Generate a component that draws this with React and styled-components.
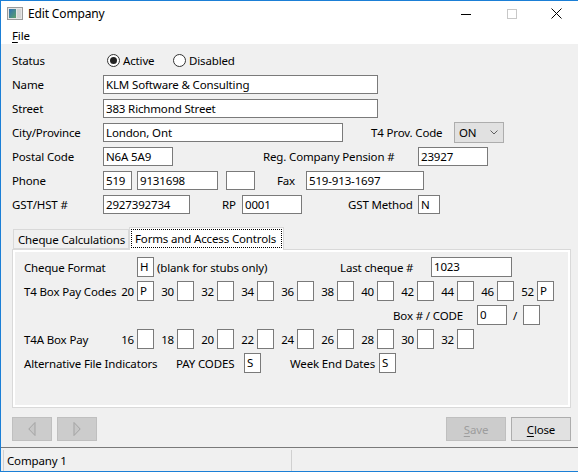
import React from 'react';
import styled, { createGlobalStyle } from 'styled-components';

const GlobalStyle = createGlobalStyle`
  html, body { margin: 0; padding: 0; background: #f0f0f0; }
  body { font-family: "Noto Sans", "Open Sans", sans-serif; font-size: 11.5px; letter-spacing: -0.15px; color: #000; }
  *, *::before, *::after { box-sizing: border-box; }
`;

const Window = styled.div`
  width: 578px;
  height: 472px;
  display: flex;
  flex-direction: column;
  border-top: 1px solid #1b7fd6;
  border-left: 1px solid #1b7fd6;
  border-bottom: 1px solid #1b7fd6;
  background: #f0f0f0;
  overflow: hidden;
`;

const TitleBar = styled.div`
  height: 25px;
  flex: none;
  display: flex;
  align-items: center;
  background: #fff;
  font-size: 12px;
`;

const TitleIcon = styled.svg`
  margin-left: 6px;
  flex: none;
`;

const TitleText = styled.span`
  margin-left: 5px;
  flex: 1;
`;

const WinButton = styled.div`
  width: ${p => p.$w || 46}px;
  height: 25px;
  display: flex;
  align-items: center;
  justify-content: center;
  flex: none;
`;

const MenuBar = styled.div`
  height: 18px;
  flex: none;
  background: #fff;
  display: flex;
  align-items: center;
  padding-left: 11px;
`;

const Mnemonic = styled.span`
  text-decoration: underline;
  text-underline-offset: 2px;
`;

const Body = styled.div`
  flex: 1;
  display: flex;
  flex-direction: column;
  min-height: 0;
`;

const FormArea = styled.div`
  padding: 4px 0 0 11px;
`;

const Row = styled.div`
  display: flex;
  align-items: center;
  height: 24px;
`;

const Label = styled.span`
  width: ${p => p.$w}px;
  margin-left: ${p => p.$ml || 0}px;
  flex: none;
  white-space: nowrap;
`;

const TextBox = styled.div`
  width: ${p => p.$w}px;
  height: ${p => p.$h || 19}px;
  margin-left: ${p => p.$ml || 0}px;
  border: 1px solid #7a7a7a;
  background: #fff;
  padding: 0 2px;
  line-height: ${p => (p.$h || 19) - 2}px;
  flex: none;
  white-space: nowrap;
  overflow: hidden;
`;

const RadioOption = styled.div`
  width: ${p => p.$w}px;
  margin-left: ${p => p.$ml || 0}px;
  display: flex;
  align-items: center;
  flex: none;
`;

const RadioCircle = styled.span`
  width: 13px;
  height: 13px;
  border-radius: 50%;
  border: 1px solid #333;
  background: #fff;
  display: flex;
  align-items: center;
  justify-content: center;
  flex: none;
  &::after {
    content: '';
    width: 7px;
    height: 7px;
    border-radius: 50%;
    background: ${p => (p.$checked ? '#222' : 'transparent')};
  }
`;

const RadioText = styled.span`
  margin-left: 3px;
`;

const Select = styled.div`
  width: 50px;
  height: 21px;
  border: 1px solid #adadad;
  background: #e1e1e1;
  display: flex;
  align-items: center;
  padding-left: 4px;
  flex: none;
`;

const Chevron = styled.svg`
  margin-left: auto;
  margin-right: 5px;
`;

const TabControl = styled.div`
  margin: 11px 7px 0 11px;
`;

const TabStrip = styled.div`
  display: flex;
  align-items: flex-end;
  height: 22px;
  padding-left: 1px;
`;

const Tab = styled.div`
  position: relative;
  z-index: ${p => (p.$active ? 1 : 0)};
  width: ${p => p.$w}px;
  height: ${p => (p.$active ? 23 : 20)}px;
  margin-bottom: ${p => (p.$active ? -1 : 0)}px;
  border: 1px solid #d9d9d9;
  border-bottom: ${p => (p.$active ? 'none' : '1px solid #d9d9d9')};
  background: ${p => (p.$active ? '#fff' : '#f0f0f0')};
  display: flex;
  align-items: ${p => (p.$active ? 'flex-start' : 'center')};
  padding: ${p => (p.$active ? '1px 1px 0 1px' : '0 0 0 4px')};
  white-space: nowrap;
  flex: none;
`;

const FocusText = styled.span`
  display: flex;
  align-items: center;
  height: 19px;
  width: 100%;
  padding-left: 4px;
  outline: 1px dotted #000;
  outline-offset: -1px;
`;

const Panel = styled.div`
  height: 159px;
  border: 1px solid #d9d9d9;
  background: #fff;
  padding: 2px;
`;

const Page = styled.div`
  height: 100%;
  background: #f0f0f0;
  padding: 3px 0 0 9px;
`;

const CodeCell = styled.div`
  width: 40px;
  display: flex;
  align-items: center;
  justify-content: flex-end;
  gap: 3px;
  flex: none;
`;

const ButtonRow = styled.div`
  display: flex;
  height: 24px;
  margin: 9px 7px 0 11px;
`;

const Button = styled.div`
  width: ${p => p.$w}px;
  height: 24px;
  margin-left: ${p => p.$ml || 0}px;
  border: 1px solid ${p => (p.$disabled ? '#bfbfbf' : '#adadad')};
  background: ${p => (p.$disabled ? '#cccccc' : '#e1e1e1')};
  color: ${p => (p.$disabled ? '#9d9d9d' : '#000')};
  display: flex;
  align-items: center;
  justify-content: center;
  flex: none;
`;

const Spacer = styled.div`
  flex: 1;
`;

const StatusBar = styled.div`
  height: 24px;
  flex: none;
  border-top: 1px solid #7a7a7a;
  display: flex;
  align-items: stretch;
  padding: 2px 0 0 2px;
`;

const StatusPanel = styled.div`
  width: 289px;
  border-left: 1px solid #d0d0d0;
  border-right: 1px solid #d0d0d0;
  padding-left: 3px;
  display: flex;
  align-items: center;
`;

const ArrowLeft = () => (
  <svg width="8" height="14" viewBox="0 0 8 14">
    <polygon points="7,0.5 7,13.5 0.8,7" fill="#c6c6c6" stroke="#a3a3a3" strokeWidth="1" />
  </svg>
);

const ArrowRight = () => (
  <svg width="8" height="14" viewBox="0 0 8 14">
    <polygon points="1,0.5 1,13.5 7.2,7" fill="#c6c6c6" stroke="#a3a3a3" strokeWidth="1" />
  </svg>
);

const t4Codes = [
  ['20', 'P'], ['30', ''], ['32', ''], ['34', ''], ['36', ''], ['38', ''],
  ['40', ''], ['42', ''], ['44', ''], ['46', ''], ['52', 'P'],
];
const t4aCodes = ['16', '18', '20', '22', '24', '26', '28', '30', '32'];

export default function App() {
  return (
    <>
      <GlobalStyle />
      <Window>
        <TitleBar>
          <TitleIcon width="16" height="13" viewBox="0 0 16 13">
            <defs>
              <linearGradient id="ig" x1="0" y1="0" x2="1" y2="1">
                <stop offset="0" stopColor="#2f6fb6" />
                <stop offset="1" stopColor="#5fa36a" />
              </linearGradient>
            </defs>
            <rect x="0.5" y="0.5" width="15" height="12" fill="#e6e6e6" stroke="#9a9a9a" />
            <rect x="2" y="2" width="7" height="9" fill="url(#ig)" />
            <rect x="10" y="2" width="4" height="9" fill="#d4d4d4" />
          </TitleIcon>
          <TitleText>Edit Company</TitleText>
          <WinButton>
            <svg width="10" height="10" viewBox="0 0 10 10">
              <line x1="0" y1="5.5" x2="10" y2="5.5" stroke="#000" strokeWidth="1" />
            </svg>
          </WinButton>
          <WinButton>
            <svg width="10" height="10" viewBox="0 0 10 10">
              <rect x="0.5" y="0.5" width="9" height="9" fill="none" stroke="#c8c8c8" strokeWidth="1" />
            </svg>
          </WinButton>
          <WinButton $w={43}>
            <svg width="11" height="11" viewBox="0 0 11 11">
              <line x1="0.5" y1="0.5" x2="10.5" y2="10.5" stroke="#000" strokeWidth="1" />
              <line x1="10.5" y1="0.5" x2="0.5" y2="10.5" stroke="#000" strokeWidth="1" />
            </svg>
          </WinButton>
        </TitleBar>
        <MenuBar>
          <span><Mnemonic>F</Mnemonic>ile</span>
        </MenuBar>
        <Body>
          <FormArea>
            <Row>
              <Label $w={91}>Status</Label>
              <RadioOption $w={66} $ml={4}>
                <RadioCircle $checked />
                <RadioText>Active</RadioText>
              </RadioOption>
              <RadioOption $w={80}>
                <RadioCircle />
                <RadioText>Disabled</RadioText>
              </RadioOption>
            </Row>
            <Row>
              <Label $w={91}>Name</Label>
              <TextBox $w={275}>KLM Software &amp; Consulting</TextBox>
            </Row>
            <Row>
              <Label $w={91}>Street</Label>
              <TextBox $w={275}>383 Richmond Street</TextBox>
            </Row>
            <Row>
              <Label $w={91}>City/Province</Label>
              <TextBox $w={240}>London, Ont</TextBox>
              <Label $w={83} $ml={28}>T4 Prov. Code</Label>
              <Select>
                ON
                <Chevron width="8" height="5" viewBox="0 0 8 5">
                  <polyline points="0.5,0.5 4,4 7.5,0.5" fill="none" stroke="#606060" strokeWidth="1" />
                </Chevron>
              </Select>
            </Row>
            <Row>
              <Label $w={91}>Postal Code</Label>
              <TextBox $w={70}>N6A 5A9</TextBox>
              <Label $w={155} $ml={90}>Reg. Company Pension #</Label>
              <TextBox $w={70}>23927</TextBox>
            </Row>
            <Row>
              <Label $w={91}>Phone</Label>
              <TextBox $w={29}>519</TextBox>
              <TextBox $w={81} $ml={5}>9131698</TextBox>
              <TextBox $w={29} $ml={8}></TextBox>
              <Label $w={29} $ml={22}>Fax</Label>
              <TextBox $w={118}>519-913-1697</TextBox>
            </Row>
            <Row>
              <Label $w={91}>GST/HST #</Label>
              <TextBox $w={87}>2927392734</TextBox>
              <Label $w={20} $ml={32}>RP</Label>
              <TextBox $w={60}>0001</TextBox>
              <Label $w={70} $ml={46}>GST Method</Label>
              <TextBox $w={22}>N</TextBox>
            </Row>
          </FormArea>

          <TabControl>
            <TabStrip>
              <Tab $w={116}>Cheque Calculations</Tab>
              <Tab $w={155} $active>
                <FocusText>Forms and Access Controls</FocusText>
              </Tab>
            </TabStrip>
            <Panel>
              <Page>
                <Row>
                  <Label $w={113}>Cheque Format</Label>
                  <TextBox $w={17} $h={20}>H</TextBox>
                  <Label $w={183} $ml={3}>(blank for stubs only)</Label>
                  <Label $w={91}>Last cheque #</Label>
                  <TextBox $w={81} $h={20}>1023</TextBox>
                </Row>
                <Row>
                  <Label $w={90}>T4 Box Pay Codes</Label>
                  {t4Codes.map(([n, v]) => (
                    <CodeCell key={n}>
                      <span>{n}</span>
                      <TextBox $w={17} $h={20}>{v}</TextBox>
                    </CodeCell>
                  ))}
                </Row>
                <Row>
                  <Label $w={84} $ml={369}>Box # / CODE</Label>
                  <TextBox $w={30} $h={20}>0</TextBox>
                  <Label $w={10} $ml={6}>/</Label>
                  <TextBox $w={17} $h={20}></TextBox>
                </Row>
                <Row>
                  <Label $w={90}>T4A Box Pay</Label>
                  {t4aCodes.map(n => (
                    <CodeCell key={n}>
                      <span>{n}</span>
                      <TextBox $w={17} $h={20}></TextBox>
                    </CodeCell>
                  ))}
                </Row>
                <Row>
                  <Label $w={152}>Alternative File Indicators</Label>
                  <Label $w={68}>PAY CODES</Label>
                  <TextBox $w={17} $h={20}>S</TextBox>
                  <Label $w={89} $ml={29}>Week End Dates</Label>
                  <TextBox $w={17} $h={20}>S</TextBox>
                </Row>
              </Page>
            </Panel>
          </TabControl>

          <ButtonRow>
            <Button $w={40} $disabled><ArrowLeft /></Button>
            <Button $w={40} $ml={5} $disabled><ArrowRight /></Button>
            <Spacer />
            <Button $w={60} $disabled><span><Mnemonic>S</Mnemonic>ave</span></Button>
            <Button $w={60} $ml={5}><span><Mnemonic>C</Mnemonic>lose</span></Button>
          </ButtonRow>
        </Body>
        <StatusBar>
          <StatusPanel>Company 1</StatusPanel>
        </StatusBar>
      </Window>
    </>
  );
}
